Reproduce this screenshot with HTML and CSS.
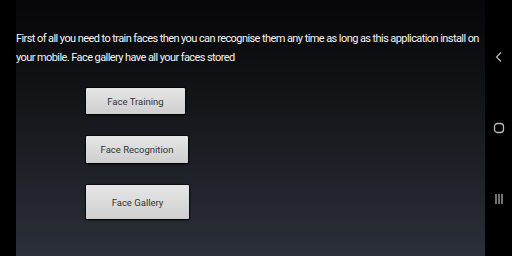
FILE: index.html
```html
<!DOCTYPE html>
<html lang="en">
<head>
    <meta charset="UTF-8">
    <meta name="viewport" content="width=device-width, initial-scale=1.0">
    <title>Face Recognition</title>
    <link rel="stylesheet" href="styles.css">
</head>
<body>
    <div class="screen">
        <div class="cutout"></div>

        <div class="content">
            <p class="intro">First of all you need to train faces then you can recognise them any time as long as this application install on your mobile. Face gallery have all your faces stored</p>

            <div class="actions">
                <button class="btn btn-training">Face Training</button>
                <button class="btn btn-recognition">Face Recognition</button>
                <button class="btn btn-gallery">Face Gallery</button>
            </div>
        </div>

        <div class="navbar">
            <svg class="nav-icon" width="10" height="12" viewBox="0 0 10 12">
                <path d="M7 1.5 L2.5 6 L7 10.5" fill="none" stroke="#bbb" stroke-width="1.2"/>
            </svg>
            <svg class="nav-icon" width="12" height="12" viewBox="0 0 12 12">
                <rect x="1.5" y="1.5" width="9" height="9" rx="3" fill="none" stroke="#bbb" stroke-width="1.3"/>
            </svg>
            <svg class="nav-icon" width="10" height="12" viewBox="0 0 10 12">
                <path d="M2 1 V11 M5 1 V11 M8 1 V11" fill="none" stroke="#bbb" stroke-width="1.2"/>
            </svg>
        </div>
    </div>
</body>
</html>
```

FILE: styles.css
```css
body, html {
    margin: 0;
    padding: 0;
    height: 100%;
    overflow: hidden;
    background: #000;
    font-family: 'Roboto', 'Liberation Sans', sans-serif;
}

.screen {
    display: flex;
    height: 256px;
    width: 512px;
}

.cutout {
    width: 16px;
    background: #000;
}

.content {
    flex: 1;
    background: linear-gradient(180deg, #060608 0%, #121317 35%, #1f2229 70%, #2b2f3a 100%);
    padding-top: 29px;
}

.intro {
    margin: 0;
    color: #f4f4f4;
    font-size: 11px;
    letter-spacing: -0.58px;
    line-height: 19px;
}

.actions {
    display: flex;
    flex-direction: column;
    align-items: flex-start;
    margin-left: 70px;
    margin-top: 21px;
}

.btn {
    border: none;
    border-radius: 1px;
    background: linear-gradient(180deg, #e6e6e6, #cfcfcf);
    color: #333;
    font-family: 'Roboto', 'Liberation Sans', sans-serif;
    font-size: 9.5px;
    padding: 0;
    box-shadow: 0 1px 2px rgba(0, 0, 0, 0.9), 0 0 1px 1px rgba(0, 0, 0, 0.6);
}

.btn-training {
    width: 99px;
    height: 26px;
}

.btn-recognition {
    width: 102px;
    height: 27px;
    margin-top: 22px;
}

.btn-gallery {
    width: 103px;
    height: 34px;
    margin-top: 22px;
}

.navbar {
    width: 27px;
    background: #000;
    display: flex;
    flex-direction: column;
    align-items: center;
    padding-top: 51px;
    gap: 59px;
}

.nav-icon {
    display: block;
}
```
